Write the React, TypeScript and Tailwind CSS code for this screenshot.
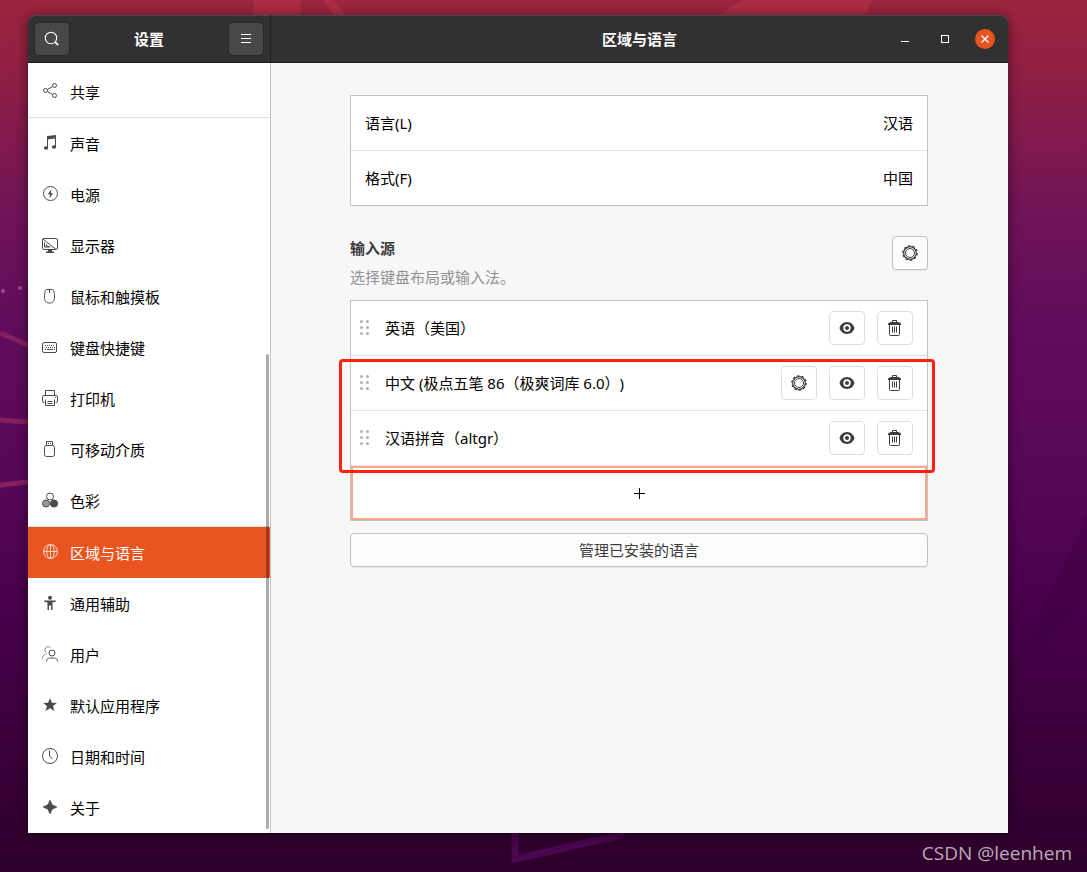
import React, { useState } from "react";

interface IconProps {
  children: React.ReactNode;
}

interface SidebarItem {
  id: string;
  label: string;
  icon: React.ReactNode;
  divider?: boolean;
}

interface InputSource {
  id: string;
  name: string;
  configurable: boolean;
}

const Icon: React.FC<IconProps> = ({ children }) => (
  <svg
    className="h-4 w-4 shrink-0 overflow-visible"
    viewBox="0 0 16 16"
    fill="none"
    stroke="currentColor"
    strokeWidth="1"
    aria-hidden="true"
  >
    {children}
  </svg>
);

const SearchIcon = () => (
  <Icon>
    <circle cx="7" cy="7" r="5.700" strokeWidth="1.100" />
    <path d="M11.200 11.200l3 3" strokeWidth="1.800" />
  </Icon>
);

const MenuIcon = () => (
  <Icon>
    <path d="M3 3.500h10M3 7.500h10M3 11.500h10" />
  </Icon>
);

const GearIcon = () => (
  <Icon>
    <circle cx="8" cy="8" r="6.300" strokeWidth="1.200" />
    <circle cx="8" cy="8" r="7.100" strokeWidth="1.400" strokeDasharray="2.400 2.061" />
    <circle cx="8" cy="8" r="4.500" />
  </Icon>
);

const EyeIcon = () => (
  <Icon>
    <path
      d="M8 2C4 2 1.300 5 .5 8c.8 3 3.500 6 7.500 6s6.700-3 7.500-6C14.700 5 12 2 8 2zm0 2.300a3.700 3.700 0 1 1 0 7.400 3.700 3.700 0 0 1 0-7.400z"
      fill="currentColor"
      fillRule="evenodd"
      stroke="none"
    />
    <circle cx="8" cy="8" r="2" fill="currentColor" stroke="none" />
  </Icon>
);

const TrashIcon = () => (
  <Icon>
    <path d="M5.500 2.500v-2h4v2" />
    <path d="M1 5V3.500L3.500 2h8L14 3.500V5z" fill="currentColor" stroke="none" />
    <path d="M2.500 5v9.500a1 1 0 0 0 1 1h8a1 1 0 0 0 1-1V5" />
    <path d="M5.500 6.500v6M7.500 6.500v6M9.500 6.500v6" />
  </Icon>
);

const sidebarItems: SidebarItem[] = [
  {
    id: "sharing",
    label: "共享",
    divider: true,
    icon: (
      <Icon>
        <circle cx="3.500" cy="7.500" r="2" />
        <circle cx="12.500" cy="2.500" r="2" />
        <circle cx="12.500" cy="12.500" r="2" />
        <path d="M5.300 6.500l5.400-3M5.300 8.500l5.400 3" />
      </Icon>
    ),
  },
  {
    id: "sound",
    label: "声音",
    icon: (
      <Icon>
        <path d="M5 1l9-1v3.500L5 4.500z" fill="currentColor" stroke="none" />
        <path d="M5.500 3v10M13.500 2v10" />
        <ellipse cx="4" cy="13" rx="2.200" ry="1.800" fill="currentColor" stroke="none" />
        <ellipse cx="12" cy="12" rx="2.200" ry="1.800" fill="currentColor" stroke="none" />
      </Icon>
    ),
  },
  {
    id: "power",
    label: "电源",
    icon: (
      <Icon>
        <circle cx="8.500" cy="7.500" r="7" />
        <path d="M9.300 3.300L5.800 8.300h2.200l-.4 3.800 3.500-4.900H8.900z" fill="currentColor" stroke="none" />
      </Icon>
    ),
  },
  {
    id: "display",
    label: "显示器",
    icon: (
      <Icon>
        <rect x=".5" y="1.500" width="15" height="11" rx="1.500" />
        <path d="M1 2l13 10.500M2.500 5.500v4.500h6M4.500 7.500v2h2.500" />
        <path d="M6 13h4v1.500h2V16H4v-1.500h2z" fill="currentColor" stroke="none" />
      </Icon>
    ),
  },
  {
    id: "mouse",
    label: "鼠标和触摸板",
    icon: (
      <Icon>
        <path d="M4.500 1.500h6c1.500 0 2 4.500 2 7.500 0 4-1.500 6-5 6s-5-2-5-6c0-3 .5-7.500 2-7.500zM7.500 1.500V5" />
      </Icon>
    ),
  },
  {
    id: "keyboard",
    label: "键盘快捷键",
    icon: (
      <Icon>
        <rect x=".5" y="3.500" width="14" height="10" rx="1.500" />
        <path d="M3 6.500h10M4 8.500h9" strokeDasharray="1 1" />
        <path d="M3 10.500h1M5 10.500h6M12 10.500h1" />
      </Icon>
    ),
  },
  {
    id: "printers",
    label: "打印机",
    icon: (
      <Icon>
        <path d="M3.500 5V.500h9V5M2.500 12.500H2A1.500 1.500 0 0 1 .5 11V7A1.500 1.500 0 0 1 2 5.500h12A1.500 1.500 0 0 1 15.500 7v4a1.500 1.500 0 0 1-1.500 1.500h-.5" />
        <path d="M3.500 9.500v6h9v-6M5.500 11.500h5M5.500 13.500h5M13 7.500h1" />
      </Icon>
    ),
  },
  {
    id: "media",
    label: "可移动介质",
    icon: (
      <Icon>
        <rect x="2.500" y="4.500" width="10" height="11" rx="2" />
        <path d="M4.500 4V.500h6V4M6 2.500h1M8 2.500h1" />
      </Icon>
    ),
  },
  {
    id: "color",
    label: "色彩",
    icon: (
      <Icon>
        <circle cx="8" cy="4.500" r="3.500" />
        <circle cx="4" cy="11.500" r="3.500" fill="#9a9a9a" />
        <circle cx="12" cy="11.500" r="3.600" fill="currentColor" />
      </Icon>
    ),
    divider: true,
  },
  {
    id: "region",
    label: "区域与语言",
    icon: (
      <Icon>
        <circle cx="8.500" cy="7.500" r="7" />
        <ellipse cx="8.500" cy="7.500" rx="3.800" ry="7" />
        <path d="M8.500.500v14M1.500 7.500h14" />
      </Icon>
    ),
  },
  {
    id: "access",
    label: "通用辅助",
    icon: (
      <Icon>
        <circle cx="8" cy="2.800" r="2" fill="currentColor" stroke="none" />
        <path d="M2 5.500h12v1l-3.500 1V15H9v-4.500H7V15H5.500V7.500l-3.500-1z" fill="currentColor" stroke="none" />
      </Icon>
    ),
  },
  {
    id: "users",
    label: "用户",
    icon: (
      <Icon>
        <path d="M8.500 1.500A3 3 0 1 0 4 6.500M.5 13c0-3 1-4.500 4-5" opacity=".6" />
        <circle cx="10" cy="7" r="3" />
        <path d="M4.500 15.500c0-3 1.500-3.500 5.500-3.500s5.500.5 5.500 3.500" />
      </Icon>
    ),
  },
  {
    id: "defaults",
    label: "默认应用程序",
    icon: (
      <Icon>
        <path d="M8 1l1.900 4.700 5 .2-3.900 3.200 1.400 4.900L8 11.200 3.600 14 5 9.100 1.100 5.900l5-.2z" fill="currentColor" stroke="none" />
      </Icon>
    ),
  },
  {
    id: "datetime",
    label: "日期和时间",
    icon: (
      <Icon>
        <circle cx="8" cy="8" r="7.500" />
        <path d="M7.500 2.500V8l3 3" />
      </Icon>
    ),
  },
  {
    id: "about",
    label: "关于",
    icon: (
      <Icon>
        <path d="M8 1l2.200 4.800L15 8l-4.800 2.200L8 15l-2.200-4.800L1 8l4.800-2.200z" fill="currentColor" strokeLinejoin="round" strokeWidth=".6" />
      </Icon>
    ),
  },
];

const localeRows = [
  { label: "语言(L)", value: "汉语" },
  { label: "格式(F)", value: "中国" },
];

const inputSources: InputSource[] = [
  { id: "us", name: "英语（美国）", configurable: false },
  { id: "wubi", name: "中文 (极点五笔 86（极爽词库 6.0）)", configurable: true },
  { id: "altgr", name: "汉语拼音（altgr）", configurable: false },
];

const Wallpaper = () => (
  <svg
    className="absolute inset-0 h-full w-full"
    viewBox="0 0 1087 872"
    preserveAspectRatio="none"
    aria-hidden="true"
  >
    <defs>
      <linearGradient id="sky" x1="0" y1="0" x2="0" y2="1">
        <stop offset="0" stopColor="#9c243d" />
        <stop offset=".1" stopColor="#8d1e45" />
        <stop offset=".24" stopColor="#711458" />
        <stop offset=".36" stopColor="#620d5c" />
        <stop offset=".55" stopColor="#580758" />
        <stop offset=".72" stopColor="#460049" />
        <stop offset=".93" stopColor="#350033" />
        <stop offset="1" stopColor="#2e002b" />
      </linearGradient>
    </defs>
    <rect width="1087" height="872" fill="url(#sky)" />
    <path d="M254 0h47v16h-47zM745 0h127l-6 16H720q8-10 25-16z" fill="#aa2b44" />
    <path d="M323 0h11l13 16h-12z" fill="#aa2b44" />
    <path d="M1087 515l-78 165 78-82z" fill="#3c003f" opacity=".35" />
    <path d="M0 333l28 12M0 420l28 2M0 485l28-3" stroke="#832060" strokeWidth="5" />
    <circle cx="3" cy="291" r="2" fill="#a04c8e" />
    <circle cx="20" cy="288" r="2" fill="#a04c8e" />
    <path d="M515 826v33l102-23 18-14" fill="none" stroke="#4b0650" strokeWidth="7" />
  </svg>
);

const IconButton: React.FC<{ label: string; children: React.ReactNode }> = ({ label, children }) => (
  <button
    type="button"
    aria-label={label}
    className="flex h-[34px] w-9 items-center justify-center rounded border border-[#dedede] bg-white text-[#3d3d3d]"
  >
    {children}
  </button>
);

const DragHandle = () => (
  <svg className="h-4 w-[10px] shrink-0" viewBox="0 0 10 16" fill="#b0b0b0" aria-hidden="true">
    <circle cx="2.500" cy="1.500" r="1.500" />
    <circle cx="8.500" cy="1.500" r="1.500" />
    <circle cx="2.500" cy="7.500" r="1.500" />
    <circle cx="8.500" cy="7.500" r="1.500" />
    <circle cx="2.500" cy="13.500" r="1.500" />
    <circle cx="8.500" cy="13.500" r="1.500" />
  </svg>
);

const TitleBar = () => (
  <header className="flex h-12 rounded-t-lg border-b border-[#1d1c1c] bg-[#323030] text-white shadow-[inset_0_1px_0_#4b4a4a]">
    <div className="flex w-[243px] shrink-0 items-center justify-between border-r border-[#222121] px-[7px]">
      <button
        type="button"
        aria-label="搜索"
        className="flex h-8 w-[34px] items-center justify-center rounded bg-[#494846] shadow-[0_0_0_1px_#282727]"
      >
        <SearchIcon />
      </button>
      <h2 className="font-bold">设置</h2>
      <button
        type="button"
        aria-label="菜单"
        className="flex h-8 w-[34px] items-center justify-center rounded bg-[#494846] shadow-[0_0_0_1px_#282727]"
      >
        <MenuIcon />
      </button>
    </div>
    <div className="grid flex-1 grid-cols-[1fr_auto_1fr] items-center">
      <h1 className="col-start-2 font-bold">区域与语言</h1>
      <div className="flex justify-end gap-5 pr-[13px]">
        <button type="button" aria-label="最小化" className="flex h-5 w-5 items-center justify-center">
          <Icon>
            <path d="M4 10.500h8" />
          </Icon>
        </button>
        <button type="button" aria-label="最大化" className="flex h-5 w-5 items-center justify-center">
          <Icon>
            <rect x="4.500" y="4.500" width="7" height="7" />
          </Icon>
        </button>
        <button
          type="button"
          aria-label="关闭"
          className="flex h-5 w-5 items-center justify-center rounded-full bg-[#e95420]"
        >
          <Icon>
            <path d="M4.500 4.500l7 7M11.500 4.500l-7 7" strokeWidth="1.300" />
          </Icon>
        </button>
      </div>
    </div>
  </header>
);

const App: React.FC = () => {
  const [active, setActive] = useState("region");

  return (
    <div
      lang="zh-CN"
      className="relative flex min-h-screen flex-col bg-[#440046] pt-[15px] font-['Noto_Sans','Noto_Sans_CJK_SC',sans-serif] text-[15px] leading-5 text-black [text-spacing-trim:space-all]"
    >
      <Wallpaper />

      <div className="relative mr-[79px] ml-7 flex flex-1 flex-col rounded-t-lg shadow-[0_2px_12px_1px_rgba(0,0,0,0.45)]">
        <TitleBar />

        <div className="flex flex-1">
          <nav className="relative w-[243px] shrink-0 border-r border-[#c4c4c4] bg-white pt-[3px]">
            <ul>
              {sidebarItems.map((item) => (
                <li key={item.id} className={item.divider ? "border-b border-[#dfdfdf]" : ""}>
                  <a
                    href={`#${item.id}`}
                    onClick={() => setActive(item.id)}
                    className={
                      item.id === active
                        ? "flex h-[51px] items-start gap-3 bg-[#e95420] pt-[17px] pl-[14px] leading-[18px] text-white"
                        : "flex h-[51px] items-start gap-3 pt-[17px] pl-[14px] leading-[18px]"
                    }
                  >
                    <span className={item.id === active ? "text-[#fbd5c8]" : "text-[#4a4a4a]"}>{item.icon}</span>
                    <span>{item.label}</span>
                  </a>
                </li>
              ))}
            </ul>
            <div className="absolute top-[291px] right-px bottom-1 w-[3px] rounded-full bg-black/33" />
          </nav>

          <main className="flex-1 bg-[#f7f7f7] pt-8 pr-20 pl-[79px]">
            <div className="divide-y divide-[#e3e3e3] border border-[#c3c3c3] bg-white">
              {localeRows.map((row) => (
                <button
                  key={row.label}
                  type="button"
                  className="box-content flex h-[54px] w-[calc(100%-28px)] items-center justify-between px-[14px]"
                >
                  <span>{row.label}</span>
                  <span>{row.value}</span>
                </button>
              ))}
            </div>

            <div className="mt-7 flex items-start justify-between pb-2">
              <div>
                <h3 className="leading-[29px] font-bold text-[#3d3d3d]">输入源</h3>
                <p className="leading-[29px] text-[#929292]">选择键盘布局或输入法。</p>
              </div>
              <button
                type="button"
                aria-label="输入源选项"
                className="mt-0.5 flex h-[34px] w-9 items-center justify-center rounded border border-[#c3c3c3] bg-[#fcfcfc] text-[#3d3d3d] shadow-[0_1px_1px_rgba(0,0,0,0.07)]"
              >
                <GearIcon />
              </button>
            </div>

            <div className="relative">
              <ul className="border border-[#c3c3c3] bg-white">
                {inputSources.map((source) => (
                  <li
                    key={source.id}
                    className="flex h-[55px] items-center border-b border-[#e3e3e3] pr-[14px] pl-2"
                  >
                    <DragHandle />
                    <span className="ml-4 flex-1">{source.name}</span>
                    <div className="flex gap-3">
                      {source.configurable && (
                        <IconButton label="首选项">
                          <GearIcon />
                        </IconButton>
                      )}
                      <IconButton label="查看布局">
                        <EyeIcon />
                      </IconButton>
                      <IconButton label="移除">
                        <TrashIcon />
                      </IconButton>
                    </div>
                  </li>
                ))}
                <li>
                  <button
                    type="button"
                    aria-label="添加输入源"
                    className="flex h-[54px] w-full items-center justify-center border-2 border-[#f4a98f]"
                  >
                    <Icon>
                      <path d="M3 8.500h11M8.500 3v11" stroke="black" />
                    </Icon>
                  </button>
                </li>
              </ul>
              <div className="pointer-events-none absolute top-[59px] right-[-7px] left-[-11px] h-[114px] rounded border-3 border-[#ff2010]" />
            </div>

            <button
              type="button"
              className="mt-3 h-[34px] w-full rounded border border-[#c3c3c3] bg-[#fcfcfc] text-[#3d3d3d] shadow-[0_1px_1px_rgba(0,0,0,0.07)]"
            >
              管理已安装的语言
            </button>
          </main>
        </div>
      </div>

      <footer className="relative flex h-[39px] items-center justify-end pr-[15px] font-['Open_Sans',sans-serif] text-[19px] text-[#baabba]">
        CSDN @leenhem
      </footer>
    </div>
  );
};

export default App;
